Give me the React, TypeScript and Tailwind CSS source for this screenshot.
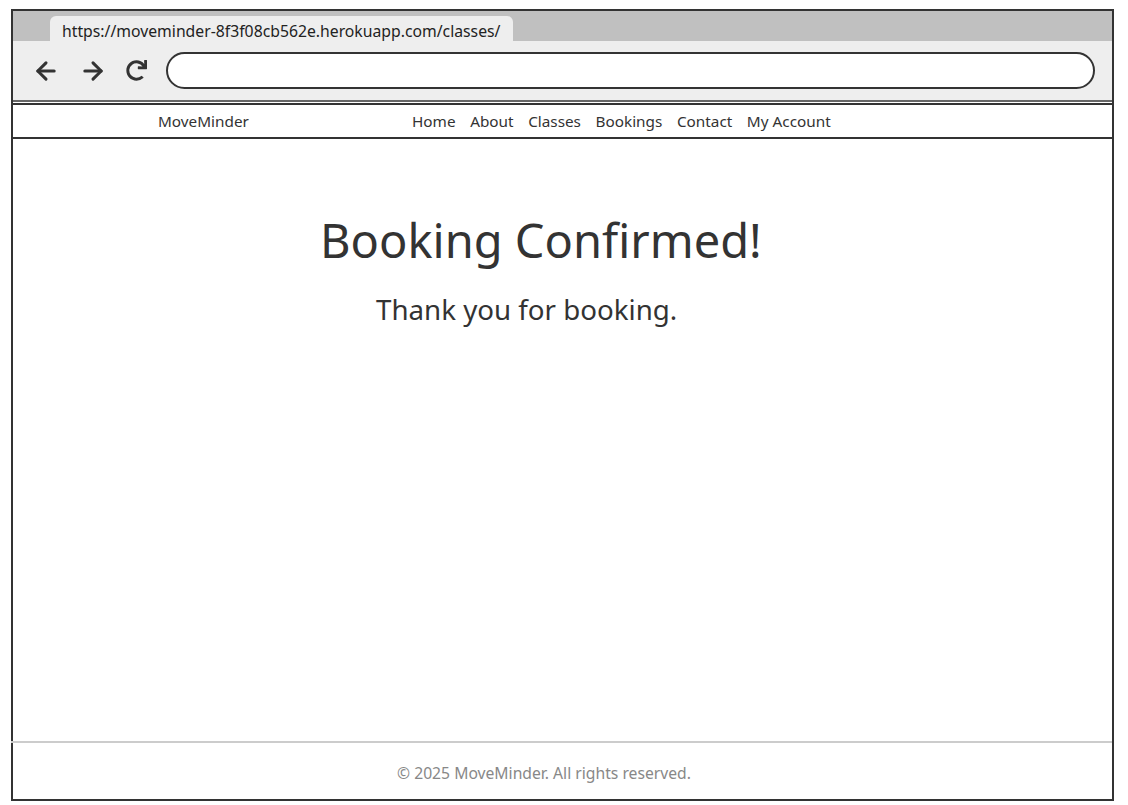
import React from "react";
import { ArrowLeft, ArrowRight } from "lucide-react";
import { FaRedo } from "react-icons/fa";

const font = { fontFamily: '"Noto Sans", "Open Sans", sans-serif' };

export default function App() {
  const links = ["Home", "About", "Classes", "Bookings", "Contact", "My Account"];
  return (
    <div className="w-[1128px] h-[805px] bg-white text-[#333]" style={font}>
      <div className="pt-[9px] pl-[11px]">
        <div className="w-[1103px] h-[792px] border-2 border-[#333] flex flex-col">
          {/* tab strip */}
          <div className="h-[30px] bg-[#c0c0c0] flex items-end pl-[37px]">
            <div className="h-[25px] w-[463px] bg-[#eeeeee] rounded-t-[6px] flex items-center pl-[12px] pt-[6px] text-[15.75px] leading-none text-[#222]">
              https://moveminder-8f3f08cb562e.herokuapp.com/classes/
            </div>
          </div>
          {/* toolbar */}
          <div className="h-[61px] bg-[#eeeeee] flex items-center pl-[19px] pr-[17px] border-b-2 border-[#666]">
            <ArrowLeft size={28} strokeWidth={2.6} className="text-[#333]" />
            <ArrowRight size={28} strokeWidth={2.6} className="text-[#333] ml-[19px]" />
            <FaRedo size={21} className="text-[#333] ml-[19px]" />
            <div className="ml-[19px] flex-1 h-[37px] bg-white border-2 border-[#333] rounded-full" />
          </div>
          <div className="h-[1px] bg-white" />
          {/* nav */}
          <div className="h-[36px] border-t-2 border-b-2 border-[#333] flex items-center text-[15.3px]">
            <div className="ml-[145px] w-[254px]">MoveMinder</div>
            <div className="flex gap-[14.6px]">
              {links.map((l) => (
                <span key={l}>{l}</span>
              ))}
            </div>
          </div>
          {/* content */}
          <div className="flex-1 flex flex-col">
            <div className="mt-[78px] ml-[307px] text-[47px] leading-none">Booking Confirmed!</div>
            <div className="mt-[32px] ml-[363px] text-[27.7px] leading-none">Thank you for booking.</div>
          </div>
          {/* footer */}
          <div className="h-[2px] bg-[#cccccc] -ml-[2px]" />
          <div className="h-[56px] flex items-center justify-center pt-[6px]">
            <span className="text-[15.7px] text-[#888] ml-[-37px]">© 2025 MoveMinder. All rights reserved.</span>
          </div>
        </div>
      </div>
    </div>
  );
}
